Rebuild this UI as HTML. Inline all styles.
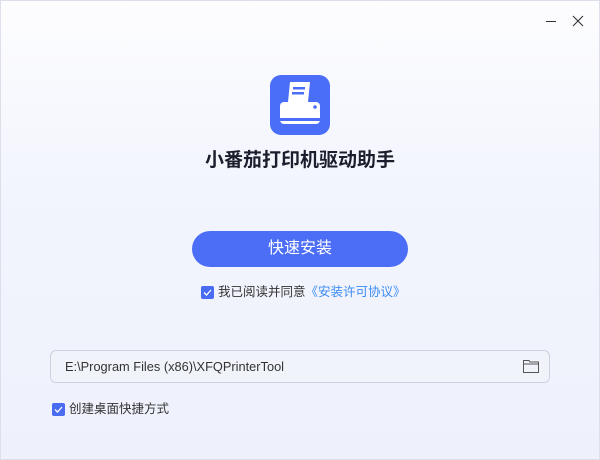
<!DOCTYPE html><html><head><meta charset="utf-8"><style>
*{margin:0;padding:0;box-sizing:border-box}
body{width:600px;height:460px;overflow:hidden;font-family:"Liberation Sans","Noto Sans CJK SC",sans-serif;background:linear-gradient(180deg,#fdfdff 0%,#f3f5fd 40%,#eef1fc 100%);position:relative;box-shadow:inset 0 0 0 1px #dde0ea}
.a{position:absolute}
.cb{width:13px;height:13px;background:#4a6cf2;border-radius:2px}
</style></head><body>
<svg class="a" style="left:544px;top:14px" width="14" height="14"><line x1="2" y1="7.5" x2="12" y2="7.5" stroke="#333" stroke-width="1"/></svg>
<svg class="a" style="left:571px;top:14px" width="14" height="14"><path d="M2 2L12 12M12 2L2 12" stroke="#333" stroke-width="1.1"/></svg>
<svg class="a" style="left:270px;top:75px" width="60" height="60" viewBox="0 0 60 60">
<rect width="60" height="60" rx="11" fill="#4a6ef8"/>
<path d="M20 7 L40 7 L38 27 L18 27 Z" fill="#fff"/>
<rect x="23" y="12" width="12" height="2.5" fill="#4a6ef8"/><rect x="22" y="17" width="12" height="2.5" fill="#4a6ef8"/>
<rect x="10" y="27" width="40" height="22" rx="4" fill="#fff"/>
<rect x="10" y="43" width="40" height="3" fill="#4a6ef8"/>
<circle cx="45" cy="32" r="1.8" fill="#4a6ef8"/>
</svg>
<div class="a" style="left:0;width:600px;top:145px;text-align:center;font-size:19px;font-weight:bold;color:#1b1e2d">小番茄打印机驱动助手</div>
<div class="a" style="left:192px;top:231px;width:216px;height:36px;border-radius:18px;background:#4c6df5;color:#fff;font-size:16px;text-align:center;line-height:35px">快速安装</div>
<div class="a cb" style="left:201px;top:286px"><svg width="13" height="13"><path d="M3 6.5L5.5 9L10 4" stroke="#fff" stroke-width="1.3" fill="none"/></svg></div>
<div class="a" style="left:218px;top:284px;font-size:12.5px;color:#333;line-height:17px">我已阅读并同意<span style="color:#3b8bf5">《安装许可协议》</span></div>
<div class="a" style="left:50px;top:350px;width:500px;height:33px;border:1px solid #cfd2de;border-radius:6px;background:#f1f3fb"></div>
<div class="a" style="left:65px;top:358px;font-size:12.8px;color:#333;line-height:17px">E:\Program Files (x86)\XFQPrinterTool</div>
<svg class="a" style="left:523px;top:360px" width="16" height="13"><path d="M0.5 0.5H6L7 2H15.5V12.5H0.5Z M0.5 4H15.5" stroke="#555" fill="none"/></svg>
<div class="a cb" style="left:52px;top:403px"><svg width="13" height="13"><path d="M3 6.5L5.5 9L10 4" stroke="#fff" stroke-width="1.3" fill="none"/></svg></div>
<div class="a" style="left:69px;top:401px;font-size:12.5px;color:#333;line-height:17px">创建桌面快捷方式</div>
</body></html>
